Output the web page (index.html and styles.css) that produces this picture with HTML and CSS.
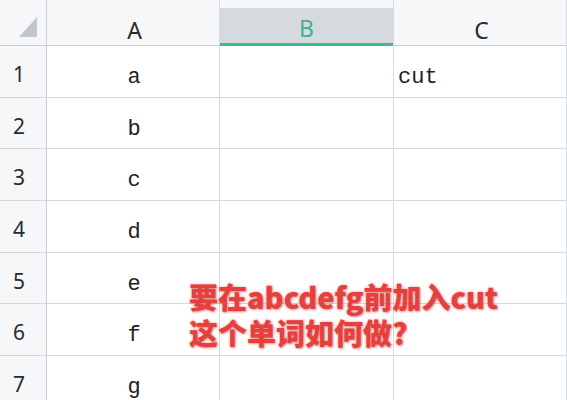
FILE: index.html
```html
<!DOCTYPE html>
<html lang="zh">
<head>
<meta charset="utf-8">
<link rel="stylesheet" href="styles.css">
</head>
<body>
<div class="sheet">
  <div class="grid">
    <div class="corner"><svg class="tri" width="18" height="20" viewBox="0 0 18 20"><polygon points="18,0 18,20 0,20" fill="#c3c6ca"/></svg></div>
    <div class="colhead">A</div>
    <div class="colhead selected"><span class="sel-inner">B</span></div>
    <div class="colhead">C</div>

    <div class="rowhead">1</div><div class="cell center">a</div><div class="cell"></div><div class="cell left">cut</div>
    <div class="rowhead">2</div><div class="cell center">b</div><div class="cell"></div><div class="cell"></div>
    <div class="rowhead">3</div><div class="cell center">c</div><div class="cell"></div><div class="cell"></div>
    <div class="rowhead">4</div><div class="cell center">d</div><div class="cell"></div><div class="cell"></div>
    <div class="rowhead">5</div><div class="cell center">e</div><div class="cell"></div><div class="cell"></div>
    <div class="rowhead">6</div><div class="cell center">f</div><div class="cell"></div><div class="cell"></div>
    <div class="rowhead">7</div><div class="cell center">g</div><div class="cell"></div><div class="cell"></div>
  </div>
  <div class="caption">
    <div class="line">要在abcdefg前加入cut</div>
    <div class="line">这个单词如何做?</div>
  </div>
</div>
</body>
</html>
```

FILE: styles.css
```css
html, body {
  margin: 0;
  padding: 0;
  background: #ffffff;
  overflow: hidden;
}
.sheet {
  position: relative;
  width: 567px;
  height: 400px;
  overflow: hidden;
}
.grid {
  display: grid;
  grid-template-columns: 47px 173px 174px 173px;
  grid-template-rows: 46px repeat(7, 51.7px);
}
.corner, .colhead, .rowhead, .cell {
  box-sizing: border-box;
  border-right: 1px solid #d6d9dd;
  border-bottom: 1px solid #d6d9dd;
}
.corner {
  background: #f6f7f8;
  border-right-color: #cdd0d5;
  border-bottom-color: #c9ccd1;
  display: flex;
  align-items: flex-end;
  justify-content: flex-end;
  padding: 0 9px 8px 0;
}
.tri { display: block; }
.colhead {
  background: #f6f7f8;
  border-bottom: 1px solid #c9ccd1;
  display: flex;
  align-items: center;
  justify-content: center;
  padding: 14px 0 0 3px;
  font-family: "Noto Sans", "Liberation Sans", sans-serif;
  font-size: 23px;
  color: #2b2b2b;
}
.colhead.selected {
  padding: 8px 0 0 0;
  align-items: stretch;
  border-bottom: none;
}
.sel-inner {
  flex: 1;
  display: flex;
  align-items: center;
  justify-content: center;
  padding-top: 4px;
  background: #d6d9de;
  border-bottom: 3px solid #3dbb8c;
  color: #3fb38a;
}
.rowhead {
  background: #f6f7f8;
  border-right-color: #c9ccd1;
  border-bottom-color: #d3d6da;
  display: flex;
  align-items: center;
  justify-content: center;
  padding: 5px 8px 0 0;
  font-family: "Noto Sans", "Liberation Sans", sans-serif;
  font-size: 21px;
  color: #2b2b2b;
}
.cell {
  background: #ffffff;
  display: flex;
  align-items: center;
  padding-top: 12px;
  font-family: "Liberation Mono", "DejaVu Sans Mono", monospace;
  font-size: 22px;
  color: #222222;
}
.cell.center { justify-content: center; padding-left: 2px; }
.cell.left { padding-left: 4px; }
.caption {
  position: absolute;
  left: 189px;
  top: 278px;
  font-family: "Noto Sans CJK SC", "Noto Sans", sans-serif;
  font-weight: 900;
  font-size: 29px;
  line-height: 36px;
  color: #e6403e;
  text-shadow: 0 0 3px rgba(230, 80, 80, 0.55), 1px 1px 2px rgba(150, 30, 30, 0.35);
  white-space: nowrap;
}
.line { height: 36px; }
```
